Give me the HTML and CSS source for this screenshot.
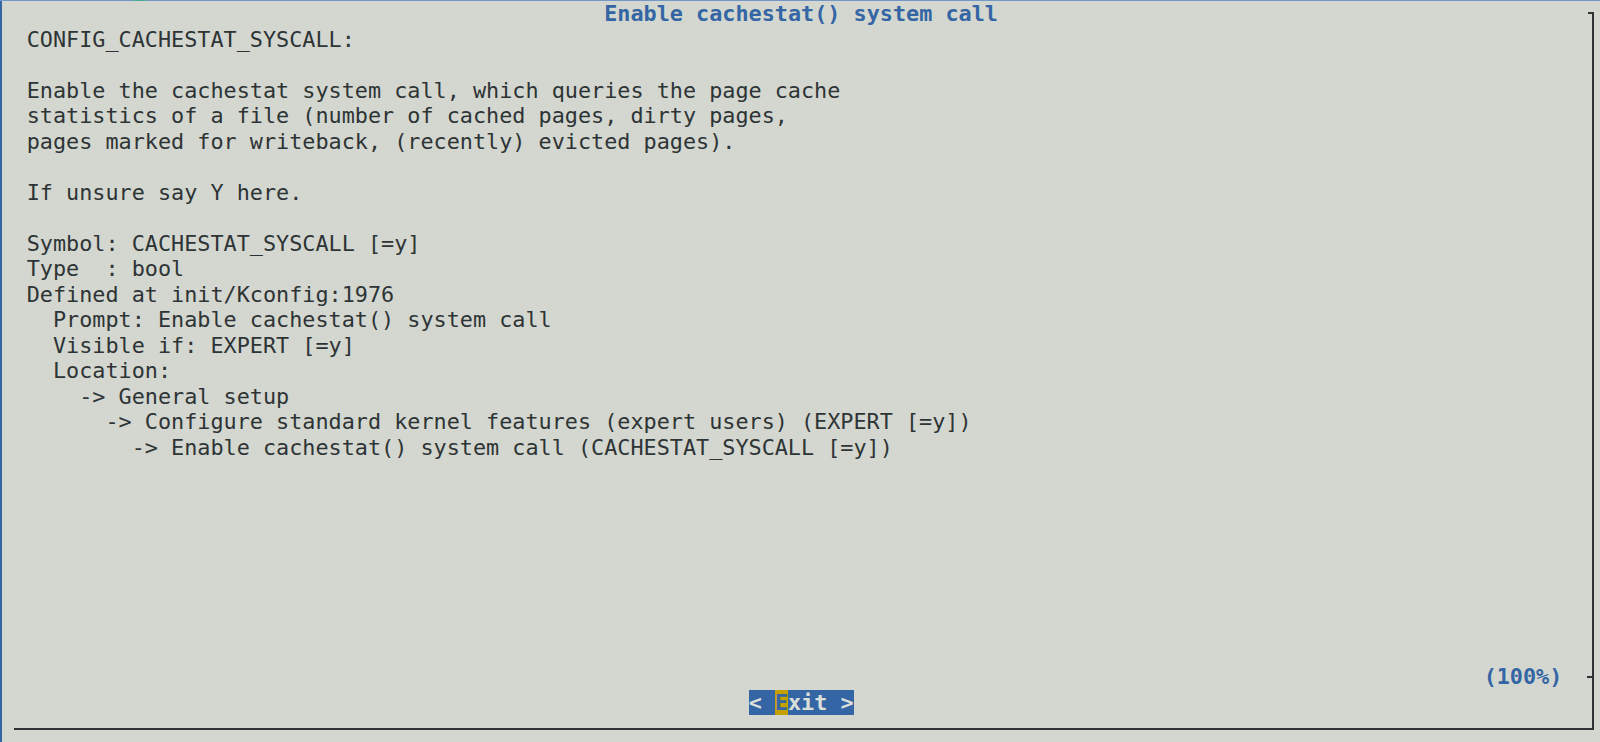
FILE: index.html
```html
<!DOCTYPE html>
<html lang="en">
<head>
<meta charset="utf-8">
<title>Enable cachestat() system call</title>
<link rel="stylesheet" href="styles.css">
</head>
<body>
<div class="term">
  <div class="dialog">
    <div class="title-row"><span class="title">Enable cachestat() system call</span></div>
    <div class="body">
      <div class="line">CONFIG_CACHESTAT_SYSCALL:</div>
      <div class="line"> </div>
      <div class="line">Enable the cachestat system call, which queries the page cache</div>
      <div class="line">statistics of a file (number of cached pages, dirty pages,</div>
      <div class="line">pages marked for writeback, (recently) evicted pages).</div>
      <div class="line"> </div>
      <div class="line">If unsure say Y here.</div>
      <div class="line"> </div>
      <div class="line">Symbol: CACHESTAT_SYSCALL [=y]</div>
      <div class="line">Type  : bool</div>
      <div class="line">Defined at init/Kconfig:1976</div>
      <div class="line">  Prompt: Enable cachestat() system call</div>
      <div class="line">  Visible if: EXPERT [=y]</div>
      <div class="line">  Location:</div>
      <div class="line">    -&gt; General setup</div>
      <div class="line">      -&gt; Configure standard kernel features (expert users) (EXPERT [=y])</div>
      <div class="line">        -&gt; Enable cachestat() system call (CACHESTAT_SYSCALL [=y])</div>
    </div>
    <div class="sep-row"><span class="percent">(100%)</span><span class="tick"></span></div>
    <div class="btn-row"><span class="btn">&lt; <span class="hot">E</span>xit &gt;</span></div>
    <div class="bottom-row"></div>
  </div>
</div>
</body>
</html>
```
FILE: styles.css
```css
:root {
  --cw: 13.125px;
  --rh: 25.5px;
  --bg: #d3d7cf;
  --fg: #2e3436;
  --blue: #3465a4;
}

html, body {
  margin: 0;
  padding: 0;
}

body {
  width: 1600px;
  height: 742px;
  overflow: hidden;
  background: var(--bg);
  box-shadow: inset 0 1px 0 #7397c6, inset 2px 0 0 #3465a4;
  position: relative;
}

body::before {
  content: "";
  position: absolute;
  top: 0;
  left: 132px;
  width: 14px;
  height: 1px;
  background: #4fa89c;
}

.term {
  padding: 1px 0 0 0.5px;
  font-family: "DejaVu Sans Mono", monospace;
  font-size: 21.8px;
  line-height: var(--rh);
  color: var(--fg);
}

.dialog {
  position: relative;
  margin-left: var(--cw);
  width: 1580.5px;
  height: calc(29 * var(--rh));
  display: flex;
  flex-direction: column;
}

.dialog::before {
  content: "";
  position: absolute;
  top: 11px;
  left: 0;
  right: 0;
  bottom: 11px;
  border-right: 2px solid var(--fg);
  border-bottom: 2px solid var(--fg);
  pointer-events: none;
}

.dialog::after {
  content: "";
  position: absolute;
  top: 11px;
  right: 0;
  width: 6px;
  height: 2px;
  background: var(--fg);
}

.title-row {
  height: var(--rh);
  padding-left: calc(45 * var(--cw));
}

.title {
  color: var(--blue);
  font-weight: bold;
  white-space: pre;
}

.body {
  height: calc(25 * var(--rh));
  padding-left: var(--cw);
}

.line {
  height: var(--rh);
  white-space: pre;
}

.sep-row {
  height: var(--rh);
  display: flex;
  align-items: center;
  padding-left: calc(112 * var(--cw));
}

.percent {
  color: var(--blue);
  font-weight: bold;
  white-space: pre;
}

.tick {
  margin-left: auto;
  margin-right: 2px;
  width: 5px;
  height: 2px;
  background: var(--fg);
}

.btn-row {
  height: var(--rh);
  padding-left: calc(56 * var(--cw));
}

.btn {
  display: inline-block;
  background: var(--blue);
  color: #dcdfd9;
  font-weight: bold;
  height: var(--rh);
  white-space: pre;
}

.hot {
  background: #c4a000;
  color: var(--blue);
}

.bottom-row {
  height: var(--rh);
}
```
